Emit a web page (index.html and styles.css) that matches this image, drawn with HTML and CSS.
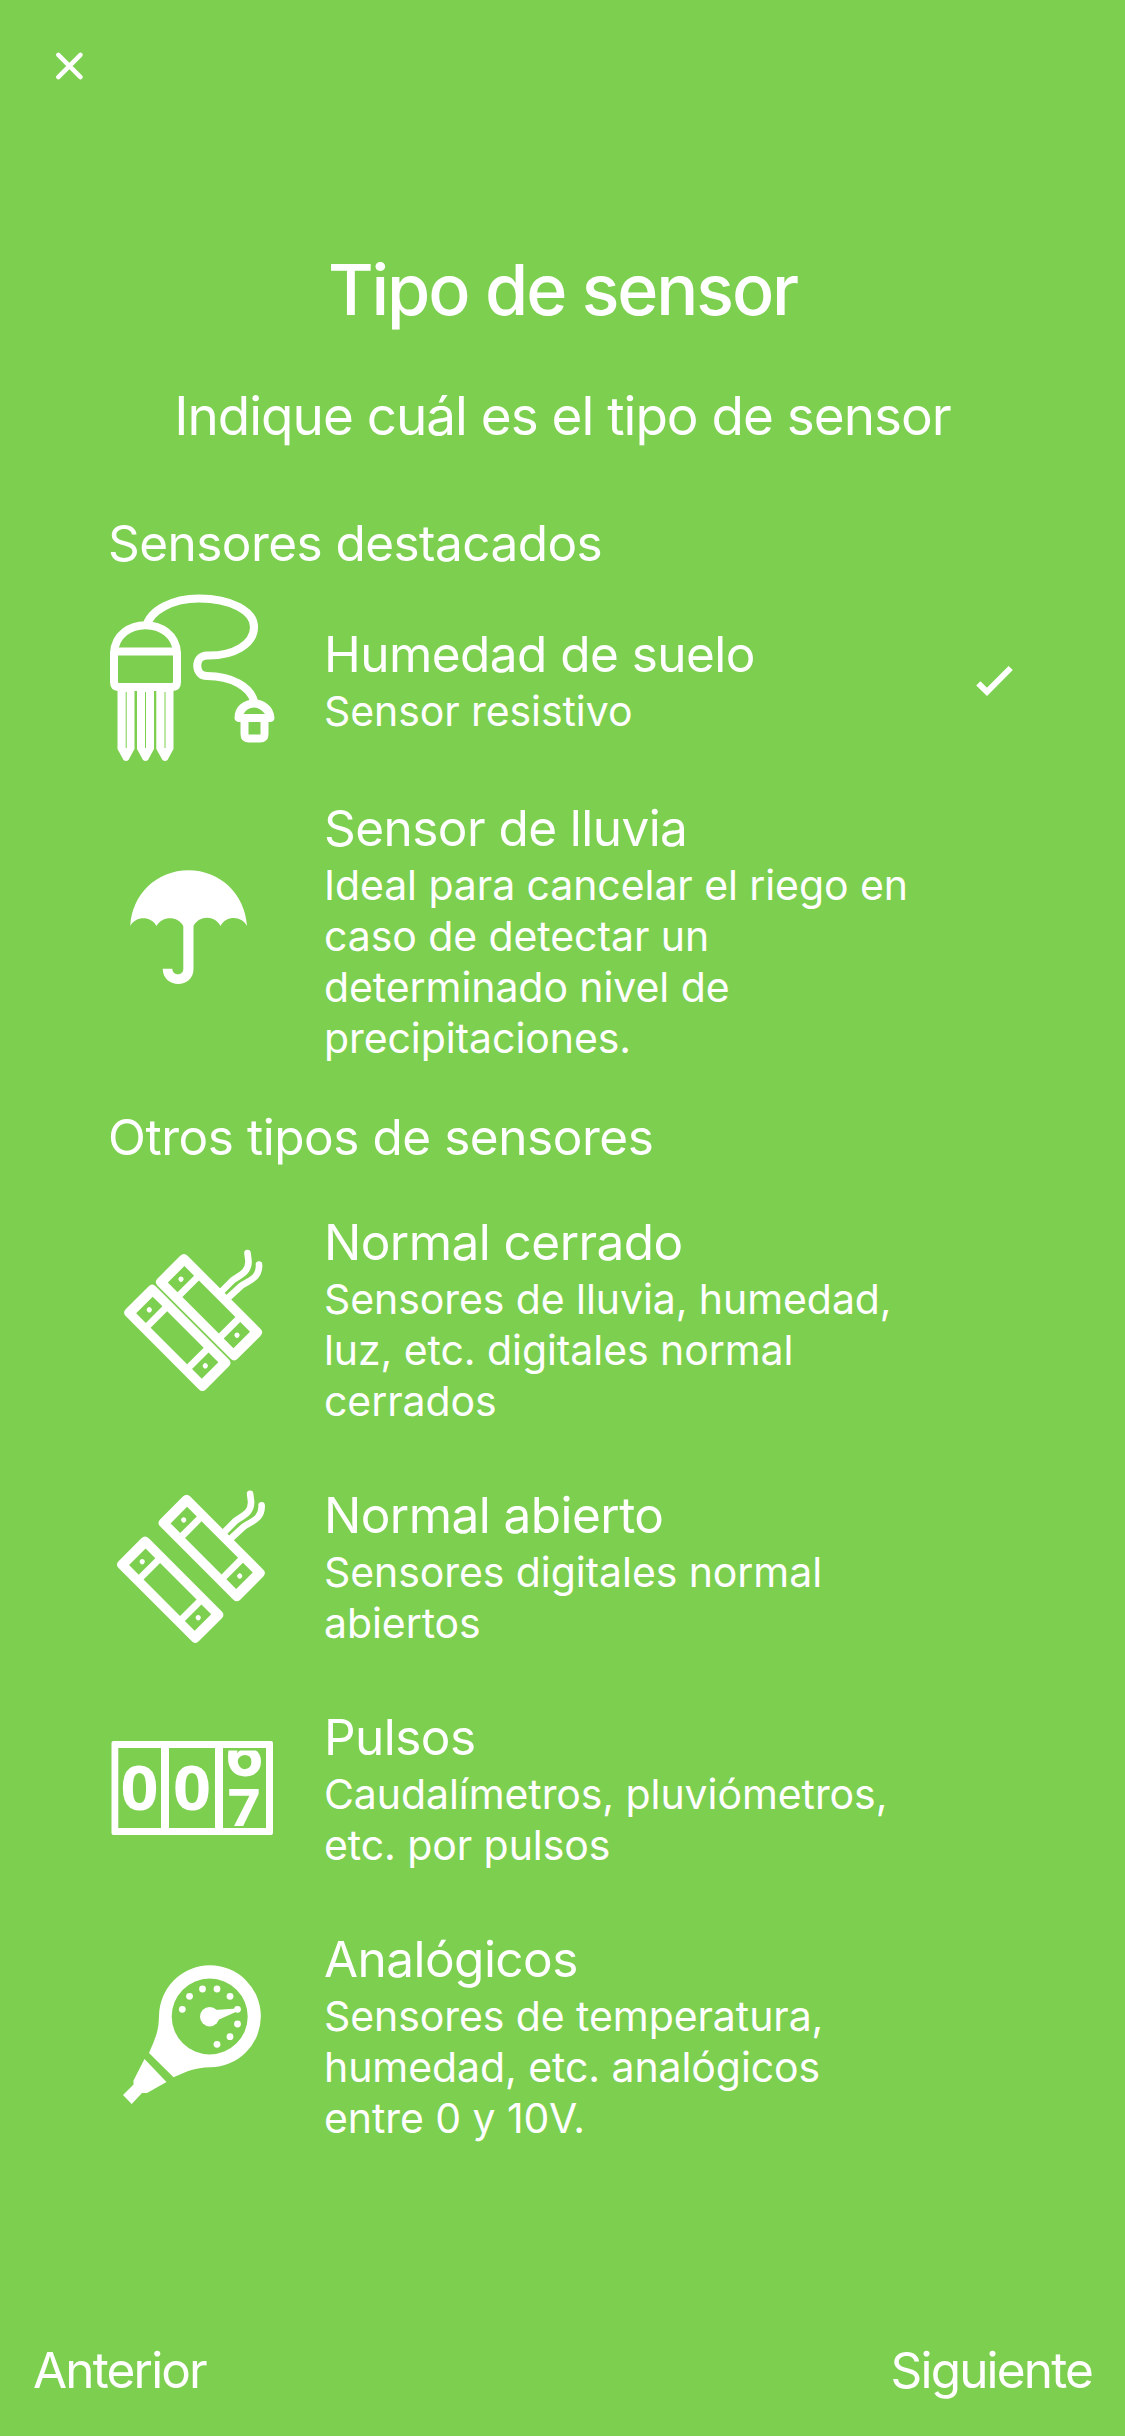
FILE: index.html
```html
<!DOCTYPE html>
<html lang="es">
<head>
<meta charset="utf-8">
<title>Tipo de sensor</title>
<link rel="stylesheet" href="styles.css">
</head>
<body>
<main class="screen">
  <header class="topbar">
    <button class="close" aria-label="Cerrar">
      <svg viewBox="0 0 30 30" width="30" height="30"><path d="M4.300 3.800L26.500 26.200M26.500 3.800L4.300 26.200" fill="none" stroke="#fff" stroke-width="4.500" stroke-linecap="round"/></svg>
    </button>
  </header>
  <h1 class="title">Tipo de sensor</h1>
  <p class="subtitle">Indique cuál es el tipo de sensor</p>

  <section class="group">
    <h2 class="heading">Sensores destacados</h2>
    <div class="row row-soil">
      <svg class="icon" viewBox="0 0 210 200" width="210" height="200">
        <g fill="none" stroke="#fff" stroke-width="8">
          <path d="M56 47C60 30 83 18.500 109 18.500C141 18.500 164 31 164 47C164 64 144 76 117 75.500C104 75.500 104 96 117 96C142 96 160 107 164 121"/>
          <path d="M24 73C26 36 85 36 87 73V102Q87 107 82 107H29Q24 107 24 102Z"/>
          <path d="M25 71.500H86"/>
          <path d="M154.500 141V154Q154.500 158.500 159 158.500H170Q174.500 158.500 174.500 154V141"/>
        </g>
        <path fill="#fff" fill-rule="evenodd" d="M144.500 138C144.500 126 154 119.500 164.300 119.500C175 119.500 184 127 184.500 138Q184 142 180 142H148.500Q144.500 141 144.500 138ZM153.500 134H175Q170 127.500 164.300 127.500Q157 127.500 153.500 134Z"/>
        <path fill="#fff" d="M27.500 108H44.500V169L38.500 180Q36 182 33.500 180L27.500 169ZM47 108H64V169L58 180Q55.500 182 53 180L47 169ZM66.300 108H83.500V169L77.500 180Q75 182 72.500 180L66.300 169Z"/>
        <path fill="none" stroke="#7dcf4f" stroke-width="1" d="M36.200 112V168M55.500 112V168M75 112V168"/>
      </svg>
      <div class="text"><h3 class="name">Humedad de suelo</h3><p class="desc">Sensor resistivo</p></div>
      <svg class="check" viewBox="0 0 38 30" width="38" height="30"><path d="M2.300 18.300L11 26.800L34.700 3" fill="none" stroke="#fff" stroke-width="6"/></svg>
    </div>
    <div class="row row-rain">
      <svg class="icon" viewBox="-10 0 210 181" width="210" height="181">
        <path fill="#fff" d="M30.300 86C32 54 57 30.300 88.500 30.300C120 30.300 145 54 147 86C142 75.500 126 75 120.500 86C115 75 99 75 93.500 86V129C93.500 149 63 149 62.700 128.700H72.300C72.500 136 83.300 136 83.300 129V86C78 75.500 62 75.500 56.500 86C51 76 36 75.500 30.300 86Z"/>
      </svg>
      <div class="text"><h3 class="name">Sensor de lluvia</h3><p class="desc">Ideal para cancelar el riego en caso de detectar un determinado nivel de precipitaciones.</p></div>
    </div>
  </section>

  <section class="group">
    <h2 class="heading heading-other">Otros tipos de sensores</h2>
    <div class="row row-closed">
      <svg class="icon" viewBox="-10 0 210 178" width="210" height="178">
        <defs>
          <g id="block" transform="rotate(45)">
            <path fill="#fff" fill-rule="evenodd" d="M-51.500 -21.200H51.500Q56.700 -21.200 56.700 -16V16Q56.700 21.200 51.500 21.200H-51.500Q-56.700 21.200 -56.700 16V-16Q-56.700 -21.200 -51.500 -21.200ZM-46.500 -11.700V11.700H-32.800V-11.700ZM-26 -11.700V11.700H25.600V-11.700ZM32.500 -11.700V11.700H46.300V-11.700Z"/>
            <circle cx="-39.600" cy="0" r="2.600" fill="#fff"/>
            <circle cx="39.600" cy="0" r="2.600" fill="#fff"/>
          </g>
          <path id="wires" d="M121 62L133 50C138 46 149 43 148.500 31L147.500 23M129 67L141 56C147 51 160 49 159 34.500" fill="none" stroke="#fff" stroke-width="6.600" stroke-linecap="round"/>
        </defs>
        <use href="#block" x="0" y="0" transform="translate(109 77.200)"/>
        <use href="#block" transform="translate(77.300 107.800)"/>
        <use href="#wires"/>
      </svg>
      <div class="text"><h3 class="name">Normal cerrado</h3><p class="desc">Sensores de lluvia, humedad, luz, etc. digitales normal cerrados</p></div>
    </div>
    <div class="row row-open">
      <svg class="icon" viewBox="-10 0 210 183" width="210" height="183">
        <use href="#block" transform="translate(111.700 73)"/>
        <use href="#block" transform="translate(70.200 114.700)"/>
        <use href="#wires" transform="translate(2.600 -4.200)"/>
      </svg>
      <div class="text"><h3 class="name">Normal abierto</h3><p class="desc">Sensores digitales normal abiertos</p></div>
    </div>
    <div class="row row-pulse">
      <svg class="icon" viewBox="-5 0 210 137" width="210" height="137">
        <path fill="#fff" fill-rule="evenodd" d="M18.500 21H176Q178 21 178 23V113Q178 115 176 115H18.500Q16.500 115 16.500 113V23Q16.500 21 18.500 21ZM23.300 28V108H66V28ZM74 28V108H120V28ZM128 28V108H171V28Z"/>
        <svg x="128" y="30.500" width="43" height="30" viewBox="128 30.500 43 30">
          <text class="digit" transform="translate(149.500 56.300) scale(1.070 1)" text-anchor="middle">6</text>
        </svg>
        <text class="digit digit-seven" transform="translate(149.200 105.500) scale(1.100 1)" text-anchor="middle">7</text>
        <text class="digit" transform="translate(44.500 90) scale(1.090 1)" text-anchor="middle">0</text>
        <text class="digit" transform="translate(97 90) scale(1.090 1)" text-anchor="middle">0</text>
      </svg>
      <div class="text"><h3 class="name">Pulsos</h3><p class="desc">Caudalímetros, pluviómetros, etc. por pulsos</p></div>
    </div>
    <div class="row row-analog">
      <svg class="icon" viewBox="-10 0 210 172" width="210" height="172">
        <path fill="#fff" fill-rule="evenodd" d="M109.700 15.300A51 51 0 0 1 110 117.300C94 118 89 120.500 73.500 127.300L49 103C58 83 58.500 78 59 66A51 51 0 0 1 109.700 15.300ZM109.700 28.500A38 38 0 1 0 109.700 104.500A38 38 0 1 0 109.700 28.500Z"/>
        <path fill="#fff" d="M44.500 109L66.500 132L47 143H42L31.700 154L23 145L33.500 134.500V130.500Z"/>
        <g fill="#fff">
          <circle cx="109.700" cy="66.700" r="9.700"/><path d="M115 60L137 58.500L138 61L118 70Z"/>
          <circle cx="82.300" cy="59.300" r="3.400"/><circle cx="89.500" cy="46.300" r="3.400"/><circle cx="102.500" cy="39" r="3.400"/><circle cx="117" cy="39" r="3.400"/><circle cx="130" cy="46.300" r="3.400"/><circle cx="137.500" cy="59.300" r="3.400"/><circle cx="137.500" cy="74" r="3.400"/><circle cx="130" cy="86.700" r="3.400"/><circle cx="117" cy="94.300" r="3.400"/>
        </g>
      </svg>
      <div class="text"><h3 class="name">Analógicos</h3><p class="desc">Sensores de temperatura, humedad, etc. analógicos entre 0 y 10V.</p></div>
    </div>
  </section>

  <footer class="nav"><button class="nav-button">Anterior</button><button class="nav-button">Siguiente</button></footer>
</main>
</body>
</html>
```
FILE: styles.css
```css
* { box-sizing: border-box; margin: 0; padding: 0; }
body { background: #7dcf4f; color: #fff; font-family: Inter, "Liberation Sans", sans-serif; }
button { border: 0; background: none; color: inherit; font: inherit; letter-spacing: inherit; }
.screen { display: flex; flex-direction: column; width: 1125px; height: 2436px; overflow: hidden; }
.topbar { height: 240px; padding: 51px 54px; }
.close { display: block; width: 30px; height: 30px; }
.close svg { display: block; }
.title { height: 100px; line-height: 100px; font-size: 70px; font-weight: 500; letter-spacing: -2.100px; text-align: center; }
.subtitle { height: 100px; margin-top: 26px; line-height: 100px; font-size: 53px; font-weight: 400; letter-spacing: -1px; text-align: center; }
.heading { height: 60px; margin-top: 47px; padding-left: 108px; line-height: 60px; font-size: 49.500px; font-weight: 400; letter-spacing: -0.550px; }
.heading-other { margin-top: 43px; letter-spacing: -0.450px; }
.row { display: flex; align-items: center; padding-left: 90px; }
.icon { flex: none; margin-right: 24px; }
.text { flex: none; width: 606px; }
.name { line-height: 63px; font-size: 49.500px; font-weight: 400; letter-spacing: -0.550px; }
.desc { line-height: 51px; font-size: 41px; letter-spacing: -0.080px; }
.check { margin-left: 46px; overflow: visible; }
.row-soil { height: 200px; margin-top: 7px; }
.row-rain { height: 267px; margin-top: 17px; }
.row-closed { height: 216px; margin-top: 44px; }
.row-open { height: 165px; margin-top: 57px; }
.row-pulse { height: 165px; margin-top: 57px; }
.row-analog { height: 216px; margin-top: 57px; }
.digit { fill: #fff; font-family: "Open Sans", sans-serif; font-size: 61px; font-weight: 700; }
.digit-seven { font-size: 52px; }
.nav { display: flex; justify-content: space-between; margin-top: auto; padding: 0 33px 36px; line-height: 60px; font-size: 49.500px; letter-spacing: -1.850px; }
```
